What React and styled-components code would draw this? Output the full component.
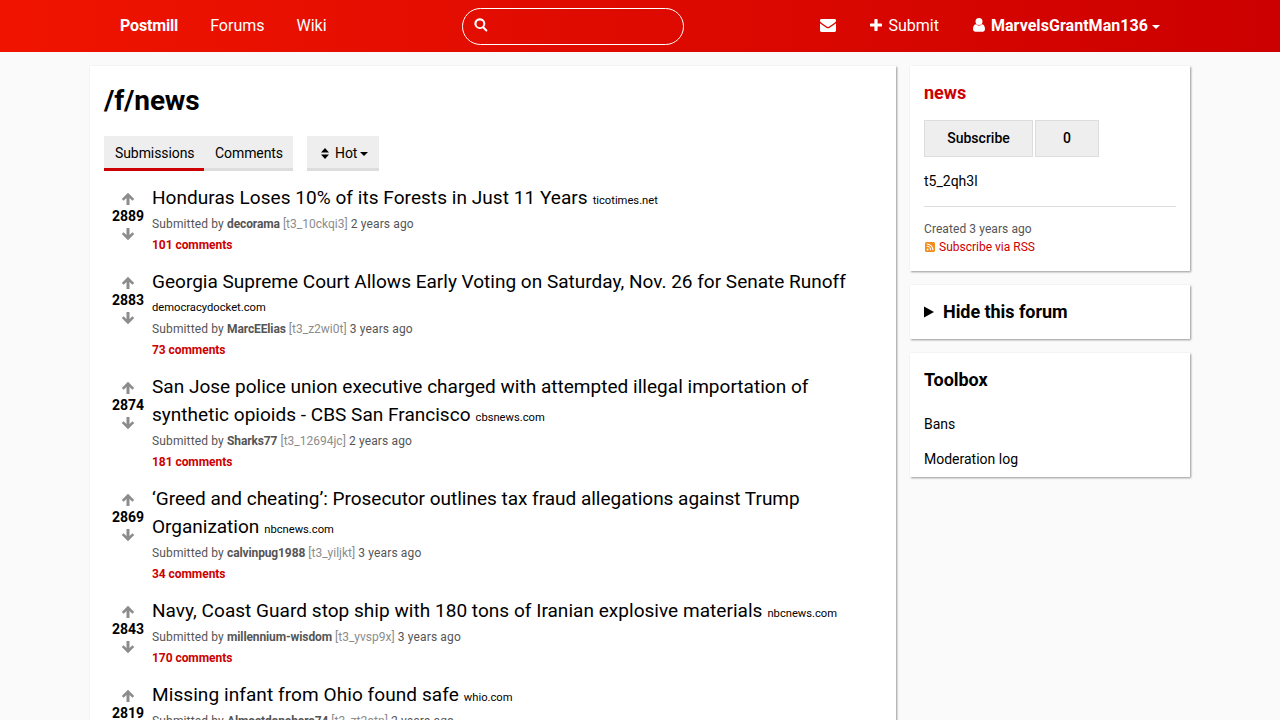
import React from "react";
import styled, { createGlobalStyle } from "styled-components";

const GlobalStyle = createGlobalStyle`
  *, *::before, *::after { box-sizing: border-box; }
  html, body { margin: 0; padding: 0; }
  body {
    height: 100vh;
    overflow: hidden;
    background: #fafafa;
    color: #000;
    font: 14px/21px Roboto, "Liberation Sans", sans-serif;
  }
  a { color: inherit; text-decoration: none; }
  h1, h2, p, ul { margin: 0; padding: 0; }
`;

const SiteNav = styled.nav`
  height: 52px;
  background: linear-gradient(to right, #f01400, #cc0000);
  color: #fff;
  font-size: 16px;
  line-height: 24px;
`;

const NavInner = styled.div`
  width: 1100px;
  height: 52px;
  margin: 0 auto;
  padding: 0 14px;
  display: grid;
  grid-template-columns: 358px 222px 1fr;
  align-items: center;
`;

const NavGroup = styled.div`
  display: flex;
  align-items: center;
  justify-content: ${(p) => (p.$end ? "flex-end" : "flex-start")};
  gap: ${(p) => (p.$end ? "2px" : "0")};
`;

const NavLink = styled.a`
  display: flex;
  align-items: center;
  padding: 0 16px;
  height: 51px;
  font-weight: ${(p) => (p.$bold ? 700 : 400)};
  letter-spacing: ${(p) => p.$track || "normal"};
  white-space: nowrap;
`;

const SearchBox = styled.div`
  height: 37px;
  margin-top: 1px;
  border: 1px solid #fff;
  border-radius: 19px;
  padding: 9px 11px;
  line-height: 0;
`;

const Icon = styled.svg`
  display: block;
  flex: none;
  fill: currentColor;
  margin: ${(p) => p.$m || 0};
`;

const Columns = styled.div`
  width: 1100px;
  margin: 14px auto 0;
  display: grid;
  grid-template-columns: 806px 280px;
  gap: 14px;
  align-items: start;
`;

const Card = styled.section`
  background: #fff;
  padding: ${(p) => p.$pad || "14px"};
  box-shadow: 1px 1px 2px rgba(0, 0, 0, 0.4);
`;

const Sidebar = styled.aside`
  display: flex;
  flex-direction: column;
  gap: 14px;
`;

const PageTitle = styled.h1`
  font-size: 28px;
  line-height: 42px;
  font-weight: 700;
  letter-spacing: -0.15px;
`;

const Toolbar = styled.div`
  display: flex;
  gap: 14px;
  margin: 14px 0;
`;

const TabGroup = styled.div`
  display: flex;
`;

const Tab = styled.a`
  display: flex;
  align-items: center;
  height: 35px;
  width: ${(p) => p.$w};
  padding: ${(p) => p.$pad};
  letter-spacing: -0.08px;
  background: #eee;
  border-bottom: 3px solid ${(p) => (p.$active ? "#c00" : "#ddd")};
`;

const Submission = styled.article`
  display: flex;
  margin-bottom: 13px;
`;

const Vote = styled.div`
  width: 48px;
  flex: none;
  display: flex;
  flex-direction: column;
  align-items: center;
  padding-top: 7px;
  color: #8c8c8c;
`;

const Score = styled.span`
  color: #000;
  font-weight: 700;
  line-height: 21px;
`;

const Content = styled.div`
  flex: 1;
  min-width: 0;
  margin-top: -1px;
`;

const Heading = styled.h1`
  margin-bottom: 2px;
  font-size: 14px;
  line-height: 21px;
  font-weight: 400;
`;

const TitleLink = styled.a`
  margin-right: 1.5px;
  font-size: 19.03px;
  line-height: 28px;
  letter-spacing: ${(p) => p.$track || 0}px;
`;

const Domain = styled.span`
  font-size: 11.2px;
  line-height: 11px;
`;

const Meta = styled.p`
  font-size: 12px;
  line-height: 21px;
  letter-spacing: 0.14px;
  color: #555;
  b { letter-spacing: -0.12px; }
`;

const Flair = styled.span`
  color: #8c8c8c;
  letter-spacing: 0;
`;

const Comments = styled.a`
  display: block;
  font-size: 12px;
  line-height: 21px;
  font-weight: 700;
  letter-spacing: -0.05px;
  color: #c00;
`;

const SideTitle = styled.h2`
  display: flex;
  align-items: center;
  font-size: 18px;
  line-height: 27px;
  font-weight: 700;
  letter-spacing: -0.05px;
  color: ${(p) => (p.$red ? "#c00" : "#000")};
`;

const SubscribeRow = styled.div`
  display: flex;
  gap: 2px;
  margin: 14px 0 14px;
`;

const SubscribeCell = styled.span`
  width: ${(p) => p.$w};
  height: 37px;
  display: flex;
  align-items: center;
  justify-content: center;
  border: 1px solid #ddd;
  background: #eee;
  font-weight: 500;
`;

const Divider = styled.div`
  height: 1px;
  margin: 14px 0 13px;
  background: #ddd;
`;

const Small = styled.div`
  display: flex;
  align-items: center;
  font-size: 12px;
  line-height: 18px;
  letter-spacing: ${(p) => (p.$red ? "0" : "0.08px")};
  color: ${(p) => (p.$red ? "#c00" : "#555")};
`;

const ToolLink = styled.a`
  display: block;
  margin-top: ${(p) => p.$top};
`;

const Caret = ({ m }) => (
  <Icon $m={m} width="8" height="4" viewBox="0 0 8 4"><path d="M0 0h8L4 4z" /></Icon>
);

const Arrow = ({ down }) => (
  <Icon width="14" height="14" viewBox="0 0 14 14">
    <path
      transform={down ? "rotate(180 7 7)" : undefined}
      d="M7 .8 13.200 7 11.400 8.800 8.500 5.900V13H5.500V5.900L2.600 8.800.8 7z"
    />
  </Icon>
);

const submissions = [
  { score: 2889, title: "Honduras Loses 10% of its Forests in Just 11 Years", domain: "ticotimes.net", user: "decorama", flair: "t3_10ckqi3", age: "2 years ago", comments: 101, track: 0.045 },
  { score: 2883, title: "Georgia Supreme Court Allows Early Voting on Saturday, Nov. 26 for Senate Runoff", domain: "democracydocket.com", user: "MarcEElias", flair: "t3_z2wi0t", age: "3 years ago", comments: 73 },
  { score: 2874, title: "San Jose police union executive charged with attempted illegal importation of synthetic opioids - CBS San Francisco", domain: "cbsnews.com", user: "Sharks77", flair: "t3_12694jc", age: "2 years ago", comments: 181, track: 0.017 },
  { score: 2869, title: "‘Greed and cheating’: Prosecutor outlines tax fraud allegations against Trump Organization", domain: "nbcnews.com", user: "calvinpug1988", flair: "t3_yiljkt", age: "3 years ago", comments: 34, track: -0.02 },
  { score: 2843, title: "Navy, Coast Guard stop ship with 180 tons of Iranian explosive materials", domain: "nbcnews.com", user: "millennium-wisdom", flair: "t3_yvsp9x", age: "3 years ago", comments: 170, track: 0.03 },
  { score: 2819, title: "Missing infant from Ohio found safe", domain: "whio.com", user: "Almostdonehere74", flair: "t3_zt2otn", age: "2 years ago", comments: 97, track: 0.075 },
];

export default function App() {
  return (
    <>
      <GlobalStyle />
      <SiteNav>
        <NavInner>
          <NavGroup>
            <NavLink $bold $track="-0.16px">Postmill</NavLink>
            <NavLink>Forums</NavLink>
            <NavLink>Wiki</NavLink>
          </NavGroup>
          <SearchBox>
            <Icon width="14" height="14" viewBox="0 0 14 14">
              <path fillRule="evenodd" d="M5.9.2a5.4 5.4 0 1 0 2.7 10l3.1 3.1c.4.4 1 .4 1.4 0s.4-1 0-1.500L10.200 8.800A5.400 5.400 0 0 0 5.900.200zm0 2.200a3.400 3.400 0 1 1 0 6.800 3.400 3.400 0 0 1 0-6.800z" />
            </Icon>
          </SearchBox>
          <NavGroup $end>
            <NavLink>
              <Icon $m="-1px 0 0 0" width="16" height="13" viewBox="0 0 16 13">
                <path d="M0 1.4C0 .6.6 0 1.4 0h13.2c.8 0 1.4.6 1.4 1.4 0 .9-.6 1.7-1.4 2.3L9.6 7.2C9 7.600 8.500 8 8 8s-1-.4-1.600-.8L1.400 3.700C.7 3.200 0 2.300 0 1.400zM0 4.200c.3.300.6.500.9.800l4.700 3.200c.7.500 1.500 1.100 2.400 1.100s1.700-.6 2.400-1.100l4.700-3.200c.3-.3.600-.5.900-.8v7.400c0 .8-.6 1.400-1.400 1.400H1.400C.6 13 0 12.400 0 11.600z" />
              </Icon>
            </NavLink>
            <NavLink>
              <Icon $m="-2px 6px 0 0" width="12" height="12" viewBox="0 0 12 12">
                <path d="M5 0h2q.6 0 .6.700v3.700h3.700q.7 0 .7.600v2q0 .6-.7.600H7.600v3.700q0 .7-.6.700H5q-.6 0-.6-.7V7.600H.7Q0 7.600 0 7V5q0-.6.7-.6h3.700V.7Q4.400 0 5 0z" />
              </Icon>
              Submit
            </NavLink>
            <NavLink $bold $track="0.05px">
              <Icon $m="-2px 6px 0 0" width="12" height="14" viewBox="0 0 12 14">
                <path d="M6 0a3.500 3.500 0 1 1 0 7 3.500 3.500 0 0 1 0-7zM2.900 6.200a4.500 4.500 0 0 0 6.200 0C11.200 6.400 12 8.800 12 11.100c0 1.600-1 2.600-2.400 2.600H2.400C1 13.700 0 12.700 0 11.100 0 8.800.8 6.400 2.900 6.200z" />
              </Icon>
              MarvelsGrantMan136
              <Caret m="2px 0 0 4px" />
            </NavLink>
          </NavGroup>
        </NavInner>
      </SiteNav>
      <Columns>
        <Card as="main">
          <PageTitle>/f/news</PageTitle>
          <Toolbar>
            <TabGroup>
              <Tab $active $w="100px" $pad="2px 0 0 11px">Submissions</Tab>
              <Tab $w="89px" $pad="2px 0 0 11px">Comments</Tab>
            </TabGroup>
            <Tab $w="72px" $pad="2px 0 0 14px">
              <Icon $m="0 6px 0 0" width="8" height="11" viewBox="0 0 8 11">
                <path d="M4 0 8 4.500H0zM0 6.500h8L4 11z" />
              </Icon>
              Hot
              <Caret m="1px 0 0 3px" />
            </Tab>
          </Toolbar>
          {submissions.map((s) => (
            <Submission key={s.score}>
              <Vote>
                <Arrow />
                <Score>{s.score}</Score>
                <Arrow down />
              </Vote>
              <Content>
                <Heading>
                  <TitleLink $track={s.track}>{s.title}</TitleLink> <Domain>{s.domain}</Domain>
                </Heading>
                <Meta>
                  Submitted by <b>{s.user}</b> <Flair>[{s.flair}]</Flair> {s.age}
                </Meta>
                <Comments>{s.comments} comments</Comments>
              </Content>
            </Submission>
          ))}
        </Card>
        <Sidebar>
          <Card $pad="13px 14px 15px">
            <SideTitle $red>news</SideTitle>
            <SubscribeRow>
              <SubscribeCell $w="109px">Subscribe</SubscribeCell>
              <SubscribeCell $w="64px">0</SubscribeCell>
            </SubscribeRow>
            <p>t5_2qh3l</p>
            <Divider />
            <Small>Created 3 years ago</Small>
            <Small $red>
              <Icon $m="0 4px 0 1px" width="10" height="10" viewBox="0 0 10 10">
                <rect width="10" height="10" rx="1.500" fill="#f28c1c" />
                <circle cx="2.600" cy="7.400" r="1" fill="#fff" />
                <path d="M1.700 4.300a4 4 0 0 1 4 4M1.700 2a6.300 6.300 0 0 1 6.300 6.300" fill="none" stroke="#fff" strokeWidth="1.100" />
              </Icon>
              Subscribe via RSS
            </Small>
          </Card>
          <Card $pad="13px 14px 14px">
            <SideTitle>
              <Icon $m="0 9px 0 0" width="10" height="12" viewBox="0 0 10 12"><path d="M0 .5 10 6 0 11.500z" /></Icon>
              Hide this forum
            </SideTitle>
          </Card>
          <Card $pad="13px 14px 7px">
            <SideTitle>Toolbox</SideTitle>
            <ToolLink $top="21px">Bans</ToolLink>
            <ToolLink $top="14px">Moderation log</ToolLink>
          </Card>
        </Sidebar>
      </Columns>
    </>
  );
}
